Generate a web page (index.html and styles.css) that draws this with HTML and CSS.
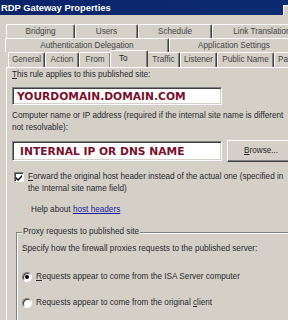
FILE: index.html
```html
<!DOCTYPE html>
<html>
<head>
<meta charset="utf-8">
<link rel="stylesheet" href="styles.css">
</head>
<body>
<div class="win">
  <div class="titlebar">
    <span class="title">RDP Gateway Properties</span>
    <span class="closebtn"></span>
  </div>
  <div class="client">
    <div class="tabs">
      <div class="row r1">
        <div class="tab w-bridging">Bridging</div>
        <div class="tab w-users">Users</div>
        <div class="tab w-schedule">Schedule</div>
        <div class="tab w-link">Link Translation</div>
      </div>
      <div class="row r2">
        <div class="tab w-auth">Authentication Delegation</div>
        <div class="tab w-app">Application Settings</div>
      </div>
      <div class="row r3">
        <div class="tab w-general">General</div>
        <div class="tab w-action">Action</div>
        <div class="tab w-from">From</div>
        <div class="tab sel w-to">To</div>
        <div class="tab w-traffic">Traffic</div>
        <div class="tab w-listener">Listener</div>
        <div class="tab w-public">Public Name</div>
        <div class="tab w-pa">Pa</div>
      </div>
    </div>
    <div class="panel">
      <div class="line"><span class="u">T</span>his rule applies to this published site:</div>
      <div class="textbox tb1"><span class="val">YOURDOMAIN.DOMAIN.COM</span></div>
      <div class="para">Computer name or IP address (required if the internal site name is different<br>not resolvable):</div>
      <div class="tbrow">
        <div class="textbox tb2"><span class="val">INTERNAL IP OR DNS NAME</span></div>
        <div class="button"><span class="u">B</span>rowse...</div>
      </div>
      <div class="check">
        <span class="box">
          <svg width="7" height="7" viewBox="0 0 7 7"><path d="M0 3 L2 5 L6 1 L6 3 L2 7 L0 5 Z" fill="#000"/></svg>
        </span>
        <div class="ctext"><span class="u">F</span>orward the original host header instead of the actual one (specified in<br>the Internal site name field)</div>
      </div>
      <div class="help">Help about <a class="link">host headers</a></div>
      <div class="group">
        <div class="legend">Proxy requests to published site</div>
        <div class="line spec">Specify how the firewall proxies requests to the published server:</div>
        <div class="radio r-first"><span class="dot on"></span><span><span class="u">R</span>equests appear to come from the ISA Server computer</span></div>
        <div class="radio"><span class="dot"></span><span>Requests appear to come from the original <span class="u">c</span>lient</span></div>
      </div>
    </div>
  </div>
</div>
</body>
</html>
```
FILE: styles.css
```css
html, body {
  margin: 0;
  padding: 0;
  background: #d4d0c8;
}
body {
  width: 288px;
  height: 320px;
  overflow: hidden;
  font-family: "Liberation Sans", Arial, sans-serif;
  font-size: 8.2px;
  color: #2a2a2a;
}
.win {
  width: 320px;
}
.titlebar {
  height: 15px;
  background: linear-gradient(to right, #0a246a, #0c2c72);
  display: flex;
  align-items: center;
  justify-content: space-between;
}
.title {
  color: #fff;
  font-weight: bold;
  font-size: 9.4px;
  padding-left: 1px;
  line-height: 15px;
}
.closebtn {
  width: 4px;
  height: 9px;
  background: #d4d0c8;
  margin-right: 32px;
  margin-top: 4px;
  border-top: 1px solid #fff;
  border-left: 1px solid #fff;
}
.client {
  padding-top: 9px;
}
.tabs {
  display: flex;
  flex-direction: column;
}
.row {
  display: flex;
  height: 14px;
}
.r1 { padding-left: 6px; }
.r2 { padding-left: 5px; }
.r3 { padding-left: 8px; height: 15px; }
.tab {
  box-sizing: border-box;
  height: 100%;
  border-top: 1px solid #fff;
  border-left: 1px solid #fff;
  border-right: 1px solid #404040;
  box-shadow: inset -1px 0 0 #808080;
  border-top-left-radius: 2px;
  border-top-right-radius: 2px;
  text-align: center;
  line-height: 13px;
  color: #444;
  white-space: nowrap;
  overflow: hidden;
}
.w-bridging { width: 69px; }
.w-users { width: 63px; }
.w-schedule { width: 74px; }
.w-link { width: 100px; }
.w-auth { width: 164px; }
.w-app { width: 130px; }
.w-general { width: 37px; }
.w-action { width: 34px; }
.w-from { width: 32px; }
.w-to { width: 36px; }
.w-traffic { width: 33px; }
.w-listener { width: 37px; }
.w-public { width: 57px; }
.w-pa { width: 30px; text-align: left; padding-left: 3px; }
.tab.sel {
  height: 17px;
  margin-top: -2px;
  position: relative;
  z-index: 2;
  background: #d4d0c8;
  color: #222;
  margin-left: -1px;
  margin-right: -1px;
  width: 38px;
  text-align: left;
  padding-left: 8px;
  line-height: 15px;
}
.panel {
  border-top: 1px solid #fff;
  border-left: 1px solid #fff;
  margin-left: 6px;
  padding: 1px 0 0 5px;
  height: 400px;
}
.line {
  line-height: 12px;
  white-space: nowrap;
}
.u { text-decoration: underline; }
.textbox {
  box-sizing: border-box;
  width: 210px;
  background: #fff;
  border-top: 1px solid #808080;
  border-left: 1px solid #808080;
  border-right: 1px solid #fff;
  border-bottom: 1px solid #fff;
  box-shadow: inset 1px 1px 0 #404040, inset -1px -1px 0 #d4d0c8;
  display: flex;
  align-items: center;
  padding-left: 4px;
}
.tb1 {
  height: 18px;
  margin-top: 6px;
}
.val {
  font-family: "DejaVu Sans", Verdana, sans-serif;
  font-weight: bold;
  font-size: 10.7px;
  color: #7a0f2d;
  white-space: nowrap;
}
.para {
  margin-top: 5px;
  line-height: 12px;
  white-space: nowrap;
}
.tbrow {
  display: flex;
  align-items: center;
  margin-top: 6px;
  gap: 5px;
}
.tb2 {
  height: 20px;
  padding-left: 7px;
}
.button {
  box-sizing: border-box;
  width: 70px;
  height: 22px;
  border-top: 1px solid #fff;
  border-left: 1px solid #fff;
  border-right: 1px solid #404040;
  border-bottom: 1px solid #404040;
  box-shadow: inset -1px -1px 0 #808080;
  line-height: 20px;
  padding-left: 16px;
}
.check {
  display: flex;
  margin-top: 9px;
  margin-left: 2px;
}
.box {
  box-sizing: border-box;
  flex: none;
  width: 10px;
  height: 10px;
  margin-top: 1px;
  background: #fff;
  border-top: 1px solid #808080;
  border-left: 1px solid #808080;
  border-right: 1px solid #fff;
  border-bottom: 1px solid #fff;
  box-shadow: inset 1px 1px 0 #404040;
  display: flex;
  align-items: center;
  justify-content: center;
  padding: 1px 0 0 1px;
}
.ctext {
  margin-left: 4px;
  line-height: 12px;
  white-space: nowrap;
}
.help {
  margin-top: 9px;
  margin-left: 19px;
  line-height: 12px;
}
.link {
  color: #1a1aa0;
  text-decoration: underline;
}
.group {
  margin-top: 16px;
  margin-left: 4px;
  border-top: 1px solid #808080;
  border-left: 1px solid #808080;
  box-shadow: inset 1px 1px 0 #fff;
  height: 200px;
  padding-left: 5px;
}
.legend {
  display: inline-block;
  background: #d4d0c8;
  line-height: 12px;
  margin-top: -7px;
  padding: 0 1px;
  vertical-align: top;
}
.spec {
  margin-top: 1px;
}
.radio {
  display: flex;
  align-items: center;
  gap: 4px;
  line-height: 12px;
  margin-top: 14px;
}
.radio.r-first {
  margin-top: 16px;
}
.dot {
  box-sizing: border-box;
  width: 10px;
  height: 10px;
  border-radius: 50%;
  background: #fff;
  border: 1px solid;
  border-color: #808080 #fff #fff #808080;
  box-shadow: inset 1px 1px 0 #404040;
  display: flex;
  align-items: center;
  justify-content: center;
}
.dot.on::after {
  content: "";
  width: 4px;
  height: 4px;
  border-radius: 50%;
  background: #000;
}
```
